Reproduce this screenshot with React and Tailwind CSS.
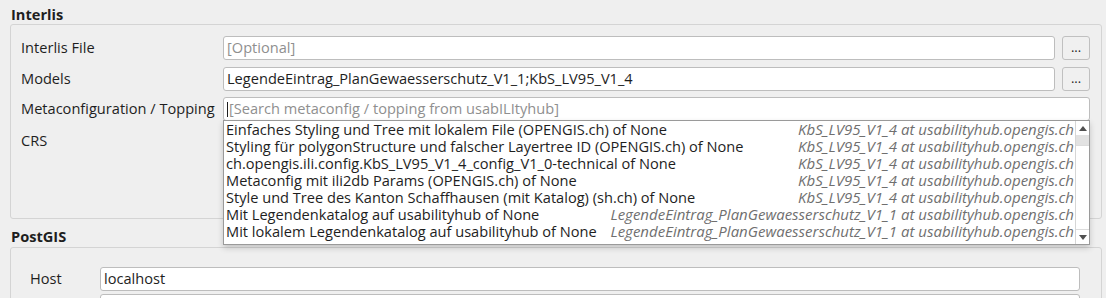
import React from 'react';

const rows = [
  ['Einfaches Styling und Tree mit lokalem File (OPENGIS.ch) of None', 'KbS_LV95_V1_4 at usabilityhub.opengis.ch'],
  ['Styling für polygonStructure und falscher Layertree ID (OPENGIS.ch) of None', 'KbS_LV95_V1_4 at usabilityhub.opengis.ch'],
  ['ch.opengis.ili.config.KbS_LV95_V1_4_config_V1_0-technical of None', 'KbS_LV95_V1_4 at usabilityhub.opengis.ch'],
  ['Metaconfig mit ili2db Params (OPENGIS.ch) of None', 'KbS_LV95_V1_4 at usabilityhub.opengis.ch'],
  ['Style und Tree des Kanton Schaffhausen (mit Katalog) (sh.ch) of None', 'KbS_LV95_V1_4 at usabilityhub.opengis.ch'],
  ['Mit Legendenkatalog auf usabilityhub of None', 'LegendeEintrag_PlanGewaesserschutz_V1_1 at usabilityhub.opengis.ch'],
  ['Mit lokalem Legendenkatalog auf usabilityhub of None', 'LegendeEintrag_PlanGewaesserschutz_V1_1 at usabilityhub.opengis.ch'],
];

function Field({ children, className = '' }) {
  return (
    <div className={`h-[24px] bg-white border border-[#bdbdbd] rounded-[3px] flex items-center px-[3px] whitespace-nowrap overflow-hidden ${className}`}>
      {children}
    </div>
  );
}

function DotsButton() {
  return (
    <div className="w-[28px] h-[24px] ml-[7px] border border-[#c0c0c0] rounded-[3px] bg-[#f0f0f0] flex items-center justify-center text-[#1e1e1e] text-[13px] leading-none pb-[2px]">
      ...
    </div>
  );
}

export default function App() {
  return (
    <div className="relative w-[1106px] h-[298px] overflow-hidden bg-[#efefef] text-[14.6px] text-[#1e1e1e]" style={{ fontFamily: '"Open Sans", "Noto Sans", sans-serif' }}>
      <div className="pl-[11px] pt-[5px] h-[24px] font-bold leading-[18px]">Interlis</div>

      <div className="ml-[10px] w-[1092px] h-[195px] border border-[#d4d4d4] rounded-[3px] pl-[10px] pt-[11px]">
        <div className="flex items-center h-[24px]">
          <div className="w-[202px]">Interlis File</div>
          <Field className="w-[832px] text-[#8f8f8f]">[Optional]</Field>
          <DotsButton />
        </div>
        <div className="flex items-center h-[24px] mt-[7px]">
          <div className="w-[202px]">Models</div>
          <Field className="w-[832px]">LegendeEintrag_PlanGewaesserschutz_V1_1;KbS_LV95_V1_4</Field>
          <DotsButton />
        </div>
        <div className="flex items-center h-[24px] mt-[6px]">
          <div className="w-[202px] whitespace-nowrap">Metaconfiguration / Topping</div>
          <Field className="w-[867px] border-[#3b6e98] text-[#8f8f8f]">
            <span className="w-px h-[15px] bg-[#1e1e1e] mr-[1px]"></span>
            [Search metaconfig / topping from usabILItyhub]
          </Field>
        </div>
        <div className="flex items-center h-[24px] mt-[8px]">
          <div className="w-[202px]">CRS</div>
        </div>
      </div>

      <div className="pl-[11px] pt-[8px] h-[28px] font-bold leading-[18px]">PostGIS</div>

      <div className="ml-[10px] w-[1092px] h-[80px] border border-[#d4d4d4] rounded-[3px] pl-[19px] pt-[19px]">
        <div className="flex items-center h-[24px]">
          <div className="w-[70px]">Host</div>
          <Field className="w-[980px]">localhost</Field>
        </div>
        <div className="mt-[3px] w-[980px] ml-[70px] h-[24px] bg-white border border-[#bdbdbd] rounded-[3px]"></div>
      </div>

      <div className="absolute left-[223px] top-[120px] w-[867px] h-[125px] bg-white border border-[#9a9a9a] shadow-[0_3px_6px_rgba(0,0,0,0.18)] flex">
        <div className="flex-1 pl-[2px] overflow-hidden">
          {rows.map(([name, src]) => (
            <div key={name} className="h-[17px] flex justify-between whitespace-nowrap">
              <div className="h-[17px] leading-[17px]">{name}</div>
              <div className="h-[17px] leading-[17px] italic text-[15px] text-[#6f6f6f] pr-[1px]">{src}</div>
            </div>
          ))}
        </div>
        <div className="w-[14px] border-l border-[#d6d6d6] flex flex-col bg-[#e6e6e6]">
          <div className="h-[14px] bg-white flex items-center justify-center">
            <svg width="8" height="5" viewBox="0 0 8 5"><path d="M0 5 L4 0 L8 5 Z" fill="#505050" /></svg>
          </div>
          <div className="h-[10px] bg-[#e2e2e2]"></div>
          <div className="flex-1 bg-white border-y border-[#dcdcdc]"></div>
          <div className="h-[14px] bg-white flex items-center justify-center">
            <svg width="8" height="5" viewBox="0 0 8 5"><path d="M0 0 L8 0 L4 5 Z" fill="#505050" /></svg>
          </div>
        </div>
      </div>
    </div>
  );
}
